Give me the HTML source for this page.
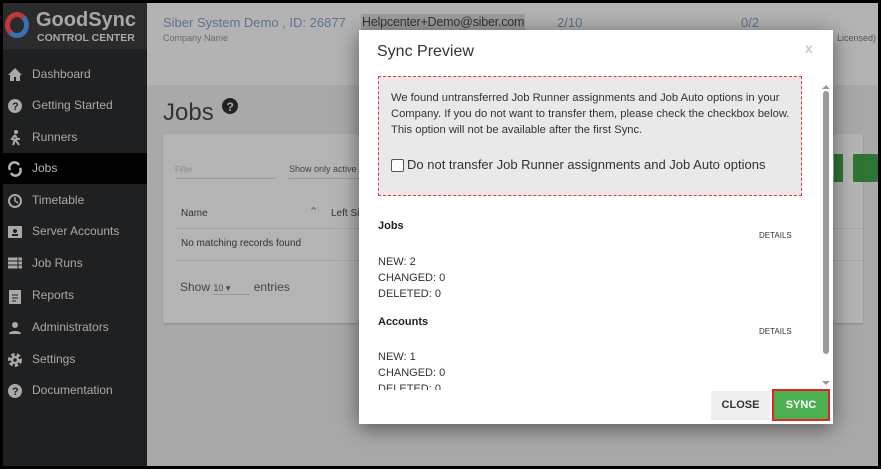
<!DOCTYPE html>
<html><head><style>
*{margin:0;padding:0;box-sizing:border-box}
body{width:881px;height:469px;background:#000;font-family:"Liberation Sans",sans-serif;position:relative;overflow:hidden}
.a{position:absolute}
#side{left:3px;top:3px;width:144px;height:463px;background:#1f2022}
#main{left:147px;top:3px;width:731px;height:463px;background:#a9a9a9}
.nav{position:absolute;left:0;width:144px;height:31px;color:#a9a9a9;font-size:12px;line-height:31px;padding-left:29px}
.nav svg{position:absolute;left:4px;top:8px}
.mt{font-size:12px;color:#333}
</style></head><body>
<div class="a" id="side">
 <div class="a" style="left:0;top:0;width:144px;height:46px;background:#2a2b2d"></div>
 <div class="a" style="left:2px;top:9px;width:24px;height:26px;border-radius:50%;border:5px solid #3a6fb0;border-left-color:#c0383a;border-top-color:#c0383a"></div>
 <div class="a" style="left:33px;top:6px;color:#a8a8a8;font-weight:bold;font-size:20px">GoodSync</div>
 <div class="a" style="left:34px;top:29px;color:#a8a8a8;font-weight:bold;font-size:10.5px">CONTROL CENTER</div>
 <div class="nav" style="top:56px"><svg width="16" height="14"><path d="M8 1L1 8h2v6h4v-4h2v4h4V8h2z" fill="#a9a9a9"/></svg>Dashboard</div>
 <div class="nav" style="top:87px"><svg width="16" height="16"><circle cx="8" cy="8" r="7" fill="#a9a9a9"/><text x="5" y="12" font-size="11" font-weight="bold" fill="#1f2022">?</text></svg>Getting Started</div>
 <div class="nav" style="top:119px"><svg width="16" height="16"><circle cx="9" cy="2" r="2" fill="#a9a9a9"/><path d="M8 5l-3 4 3 1-2 5M8 5l2 4 3 0M8 9l4 6" stroke="#a9a9a9" stroke-width="2" fill="none"/></svg>Runners</div>
 <div class="nav" style="top:150px;background:#000;color:#b5b5b5"><svg width="16" height="16"><path d="M3 9A5 5 0 0 1 12 4M13 7A5 5 0 0 1 4 12" stroke="#b5b5b5" stroke-width="2.5" fill="none"/></svg>Jobs</div>
 <div class="nav" style="top:182px"><svg width="16" height="16"><circle cx="8" cy="8" r="6" stroke="#a9a9a9" stroke-width="2" fill="none"/><path d="M8 4v4l3 2" stroke="#a9a9a9" stroke-width="1.5" fill="none"/></svg>Timetable</div>
 <div class="nav" style="top:213px"><svg width="16" height="16"><rect x="1" y="2" width="14" height="12" fill="#a9a9a9"/><circle cx="8" cy="7" r="2" fill="#1f2022"/><rect x="5" y="10" width="6" height="2" fill="#1f2022"/></svg>Server Accounts</div>
 <div class="nav" style="top:245px"><svg width="16" height="16"><path d="M1 3h14M1 7h14M1 11h14" stroke="#a9a9a9" stroke-width="3"/><path d="M11 2v12" stroke="#1f2022" stroke-width="1"/></svg>Job Runs</div>
 <div class="nav" style="top:277px"><svg width="16" height="16"><rect x="2" y="2" width="12" height="14" fill="#a9a9a9"/><path d="M5 7h6M5 10h6M5 13h4" stroke="#1f2022"/></svg>Reports</div>
 <div class="nav" style="top:309px"><svg width="16" height="16"><circle cx="8" cy="5" r="3" fill="#a9a9a9"/><path d="M2 14c0-4 12-4 12 0z" fill="#a9a9a9"/></svg>Administrators</div>
 <div class="nav" style="top:341px"><svg width="16" height="16"><circle cx="8" cy="8" r="5" stroke="#a9a9a9" stroke-width="4" stroke-dasharray="3 2" fill="none"/><circle cx="8" cy="8" r="4" fill="#a9a9a9"/><circle cx="8" cy="8" r="1.8" fill="#1f2022"/></svg>Settings</div>
 <div class="nav" style="top:372px"><svg width="16" height="16"><circle cx="8" cy="8" r="7" fill="#a9a9a9"/><text x="5" y="12" font-size="11" font-weight="bold" fill="#1f2022">?</text></svg>Documentation</div>
</div>
<div class="a" id="main">
 <div class="a" style="left:0;top:0;width:731px;height:82px;background:#b3b3b3"></div>
 <div class="a" style="left:16px;top:12px;font-size:13px;color:#5b7390">Siber System Demo , ID: 26877</div>
 <div class="a" style="left:16px;top:30px;font-size:9px;color:#6a6a6a">Company Name</div>
 <div class="a" style="left:214px;top:11px;font-size:12.5px;color:#333;background:#9c9c9c;padding:1px 1px;letter-spacing:-0.2px">Helpcenter+Demo@siber.com</div>
 <div class="a" style="left:410px;top:12px;font-size:13px;color:#5b7390">2/10</div>
 <div class="a" style="left:594px;top:12px;font-size:13px;color:#5b7390">0/2</div>
 <div class="a" style="left:690px;top:30px;font-size:9px;color:#555">Licensed)</div>
 <div class="a" style="left:16px;top:96px;font-size:24px;color:#333">Jobs</div>
 <svg class="a" style="left:75px;top:95px" width="16" height="16"><circle cx="8" cy="8" r="8" fill="#222"/><text x="4.5" y="13" font-size="12" font-weight="bold" fill="#a9a9a9">?</text></svg>
 <div class="a" style="left:16px;top:131px;width:700px;height:189px;background:#b4b4b4;box-shadow:0 1px 2px #888"></div>
 <div class="a" style="left:28px;top:162px;font-size:8px;color:#8a8a8a;width:100px;border-bottom:1px solid #999;padding-bottom:4px">Filter</div>
 <div class="a" style="left:142px;top:161px;font-size:9px;color:#444;width:80px;border-bottom:1px solid #999;padding-bottom:4px">Show only active</div>
 <div class="a" style="left:687px;top:151px;width:9px;height:28px;background:#2f7434"></div>
 <div class="a" style="left:706px;top:151px;width:25px;height:28px;background:#2f7434;border-radius:2px"></div>
 <div class="a" style="left:34px;top:205px;font-size:10px;color:#333">Name</div>
 <div class="a" style="left:162px;top:202px;font-size:11px;color:#555">&#8963;</div>
 <div class="a" style="left:184px;top:205px;font-size:10px;color:#333">Left Si</div>
 <div class="a" style="left:28px;top:225px;width:688px;border-top:1px solid #a5a5a5"></div>
 <div class="a" style="left:34px;top:235px;font-size:10px;color:#333">No matching records found</div>
 <div class="a" style="left:28px;top:257px;width:688px;border-top:1px solid #a5a5a5"></div>
 <div class="a" style="left:33px;top:277px;font-size:12px;color:#444">Show <span style="font-size:9px;border-bottom:1px solid #999;padding:0 20px 1px 0">10 ▾</span> entries</div>
</div>
<div class="a" style="left:359px;top:30px;width:474px;height:394px;background:#fff;box-shadow:0 4px 20px rgba(0,0,0,.5)">
 <div class="a" style="left:18px;top:13px;font-size:16px;color:#333">Sync Preview</div>
 <div class="a" style="left:446px;top:10px;font-size:14px;color:#ccc;font-weight:bold">x</div>
 <div class="a" style="left:19px;top:46px;width:424px;height:120px;background:#e9e9e9;border:1px dashed #e8343a"></div>
 <div class="a" style="left:32px;top:60px;width:405px;font-size:11.2px;line-height:16px;color:#333">We found untransferred Job Runner assignments and Job Auto options in your Company. If you do not want to transfer them, please check the checkbox below. This option will not be available after the first Sync.</div>
 <div class="a" style="left:32px;top:129px;width:13px;height:13px;border:1px solid #555;border-radius:2px;background:#fff"></div>
 <div class="a" style="left:48px;top:127px;font-size:13px;color:#333">Do not transfer Job Runner assignments and Job Auto options</div>
 <div class="a" style="left:19px;top:190px;font-size:11px;font-weight:bold;color:#222">Jobs</div>
 <div class="a" style="left:400px;top:201px;font-size:8px;color:#333">DETAILS</div>
 <div class="a mt" style="left:19px;top:224px;line-height:16px;font-size:11px">NEW: 2<br>CHANGED: 0<br>DELETED: 0</div>
 <div class="a" style="left:19px;top:286px;font-size:11px;font-weight:bold;color:#222">Accounts</div>
 <div class="a" style="left:400px;top:297px;font-size:8px;color:#333">DETAILS</div>
 <div class="a mt" style="left:19px;top:319px;line-height:16px;font-size:11px;height:41px;overflow:hidden">NEW: 1<br>CHANGED: 0<br>DELETED: 0</div>
 <div class="a" style="left:463px;top:51px;width:0;height:0;border:4px solid transparent;border-bottom-color:#999"></div>
 <div class="a" style="left:464px;top:61px;width:6px;height:263px;background:#9a9a9a;border-radius:3px"></div>
 <div class="a" style="left:463px;top:351px;width:0;height:0;border:4px solid transparent;border-top-color:#999"></div>
 <div class="a" style="left:352px;top:361px;width:59px;height:29px;background:#efefef;color:#333;font-size:11px;font-weight:bold;text-align:center;line-height:29px">CLOSE</div>
 <div class="a" style="left:413px;top:359px;width:58px;height:32px;background:#4caf50;border:2px solid #e0262b;color:#fff;font-size:11px;font-weight:bold;text-align:center;line-height:28px">SYNC</div>
</div>
</body></html>
